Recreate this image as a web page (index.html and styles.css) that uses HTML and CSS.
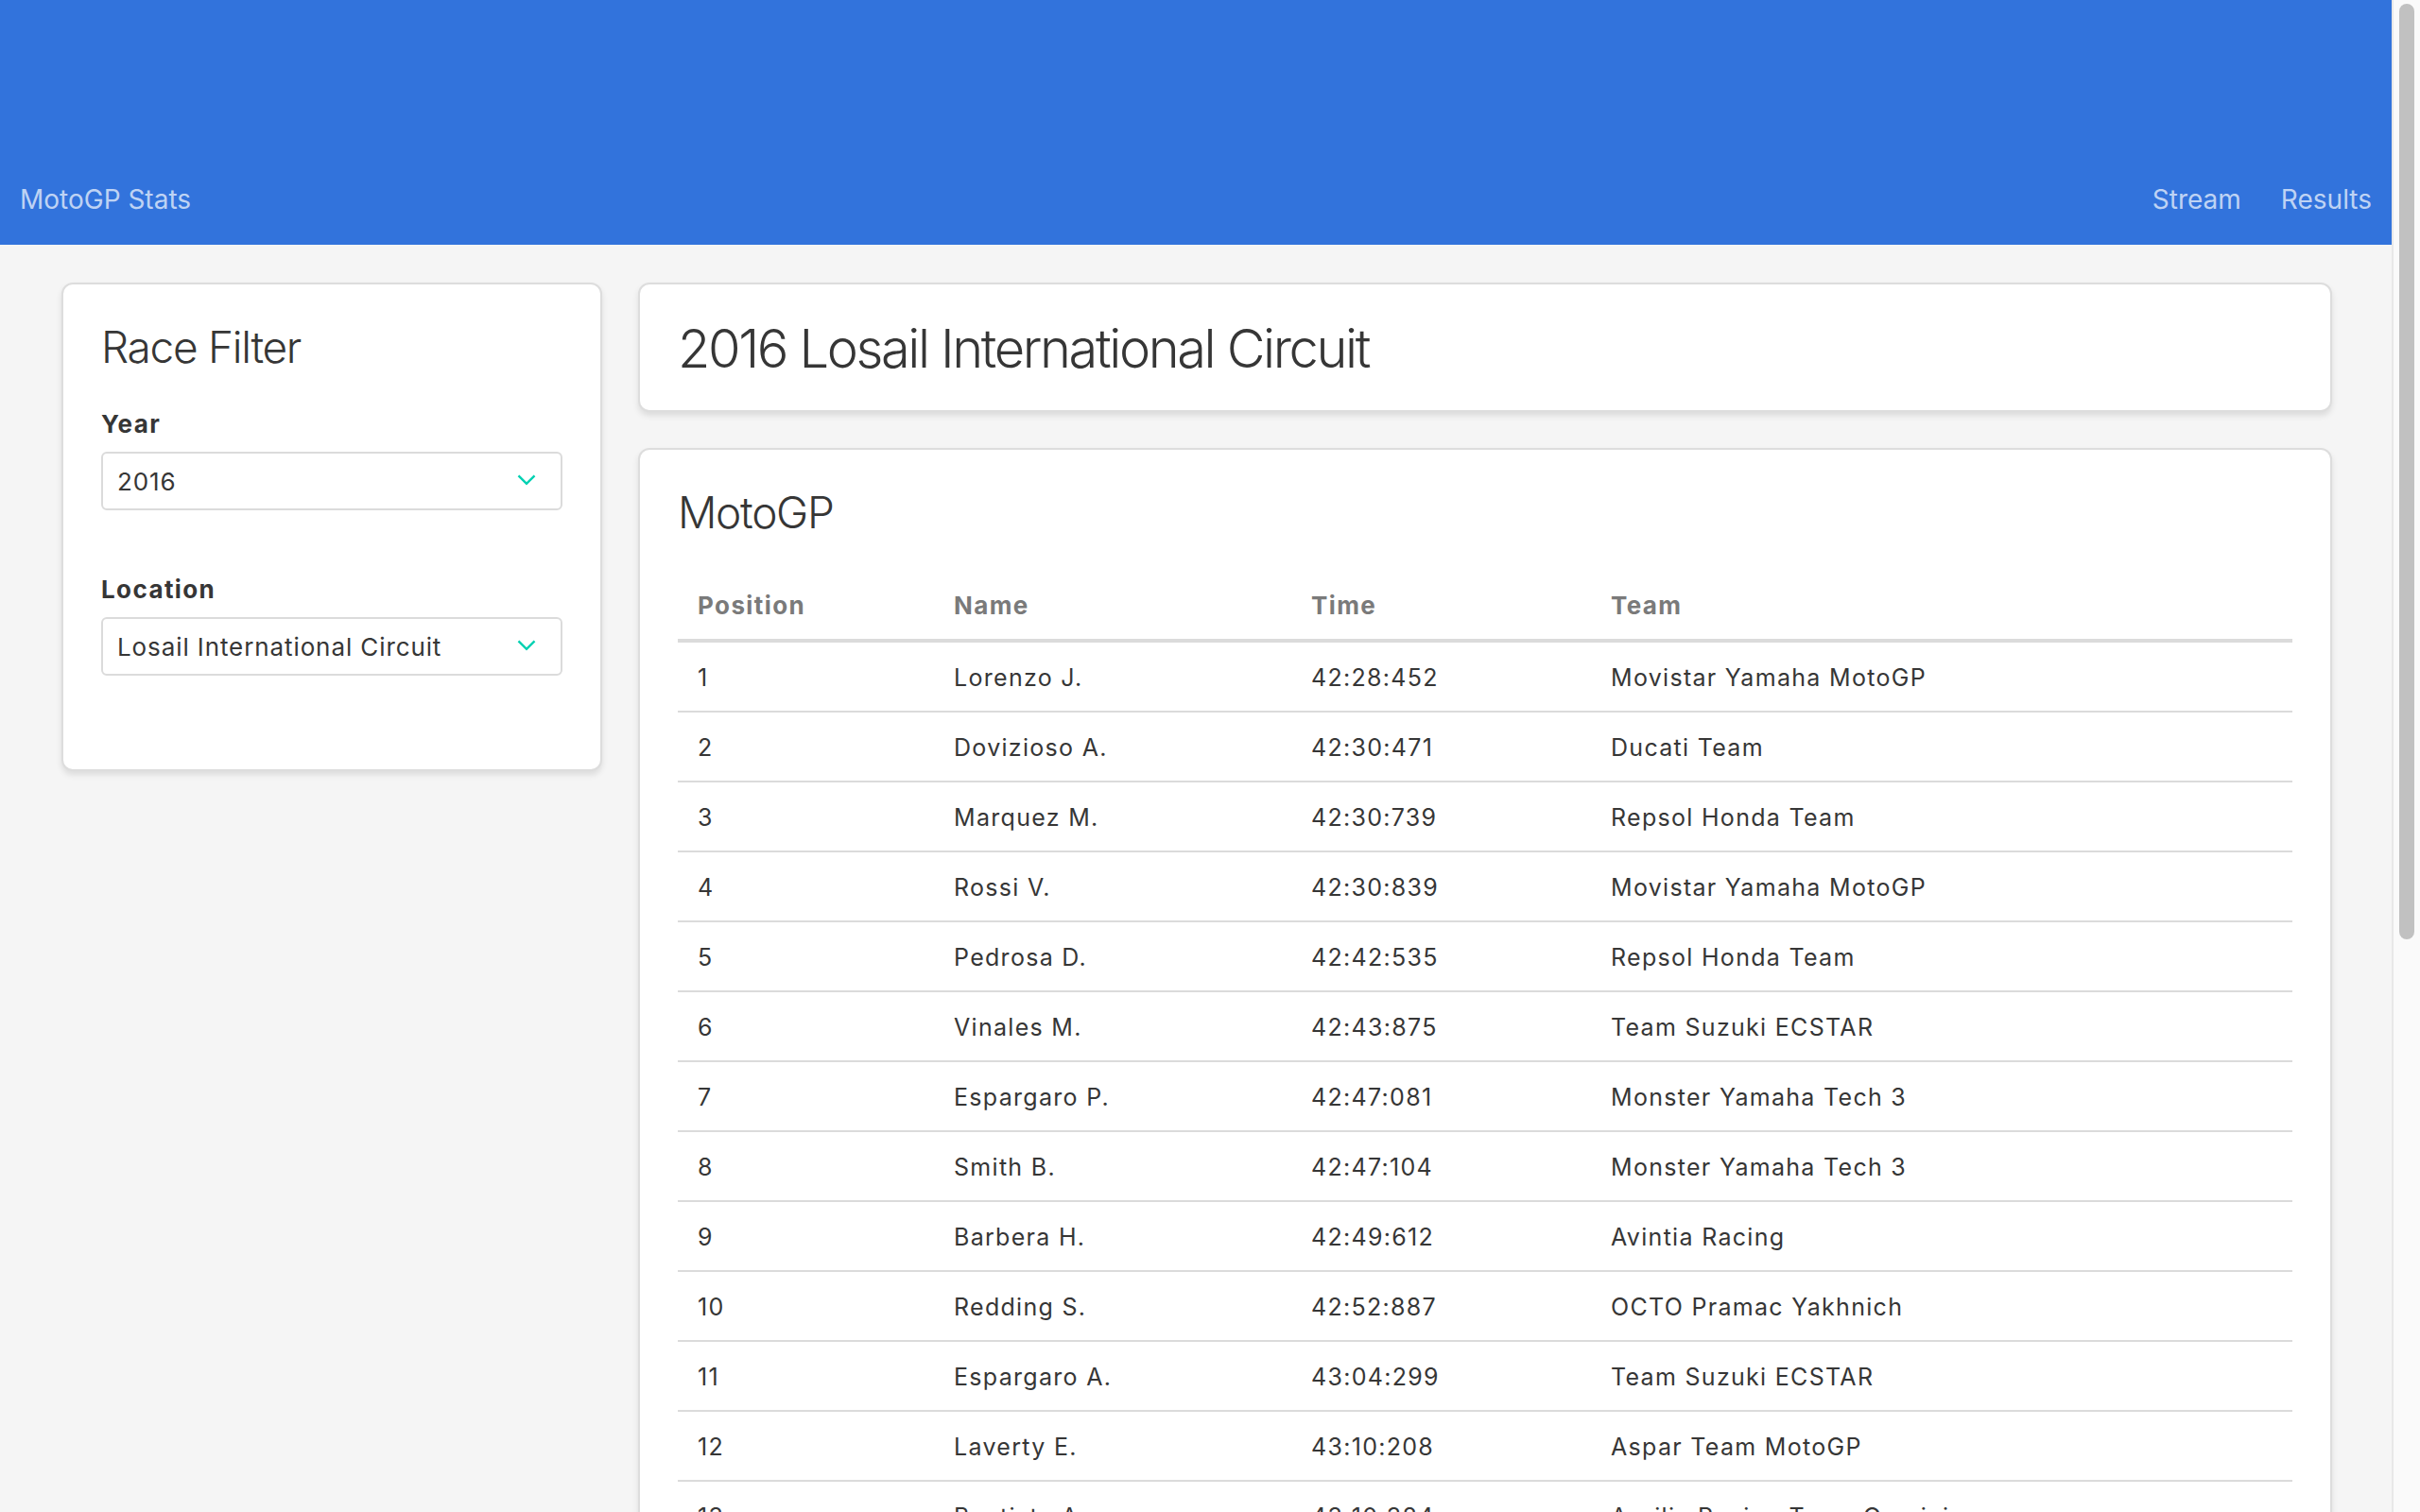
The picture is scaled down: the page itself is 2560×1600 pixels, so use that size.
FILE: index.html
```html
<!DOCTYPE html>
<html lang="en">
<head>
<meta charset="utf-8">
<title>MotoGP Stats</title>
<link rel="stylesheet" href="styles.css">
</head>
<body>
<div class="app">
  <header class="topbar">
    <nav class="nav">
      <a class="brand" href="#">MotoGP Stats</a>
      <div class="nav-links">
        <a href="#">Stream</a>
        <a href="#">Results</a>
      </div>
    </nav>
  </header>
  <main class="page">
    <aside class="box filter">
      <h2 class="title">Race Filter</h2>
      <div class="field">
        <label class="label">Year</label>
        <div class="select"><span>2016</span><svg class="arrow" viewBox="0 0 20 12" width="20" height="12"><polyline points="1.5,1.5 10,10 18.5,1.5" fill="none" stroke="#00d1b2" stroke-width="2.4"/></svg></div>
      </div>
      <div class="field">
        <label class="label">Location</label>
        <div class="select"><span>Losail International Circuit</span><svg class="arrow" viewBox="0 0 20 12" width="20" height="12"><polyline points="1.5,1.5 10,10 18.5,1.5" fill="none" stroke="#00d1b2" stroke-width="2.4"/></svg></div>
      </div>
    </aside>
    <section class="results">
      <div class="box race-box">
        <h1 class="race-title">2016 Losail International Circuit</h1>
      </div>
      <div class="box">
        <h2 class="title">MotoGP</h2>
        <table class="table">
          <thead>
            <tr><th class="c-pos">Position</th><th class="c-name">Name</th><th class="c-time">Time</th><th>Team</th></tr>
          </thead>
          <tbody>
            <tr><td>1</td><td>Lorenzo J.</td><td>42:28:452</td><td>Movistar Yamaha MotoGP</td></tr>
            <tr><td>2</td><td>Dovizioso A.</td><td>42:30:471</td><td>Ducati Team</td></tr>
            <tr><td>3</td><td>Marquez M.</td><td>42:30:739</td><td>Repsol Honda Team</td></tr>
            <tr><td>4</td><td>Rossi V.</td><td>42:30:839</td><td>Movistar Yamaha MotoGP</td></tr>
            <tr><td>5</td><td>Pedrosa D.</td><td>42:42:535</td><td>Repsol Honda Team</td></tr>
            <tr><td>6</td><td>Vinales M.</td><td>42:43:875</td><td>Team Suzuki ECSTAR</td></tr>
            <tr><td>7</td><td>Espargaro P.</td><td>42:47:081</td><td>Monster Yamaha Tech 3</td></tr>
            <tr><td>8</td><td>Smith B.</td><td>42:47:104</td><td>Monster Yamaha Tech 3</td></tr>
            <tr><td>9</td><td>Barbera H.</td><td>42:49:612</td><td>Avintia Racing</td></tr>
            <tr><td>10</td><td>Redding S.</td><td>42:52:887</td><td>OCTO Pramac Yakhnich</td></tr>
            <tr><td>11</td><td>Espargaro A.</td><td>43:04:299</td><td>Team Suzuki ECSTAR</td></tr>
            <tr><td>12</td><td>Laverty E.</td><td>43:10:208</td><td>Aspar Team MotoGP</td></tr>
            <tr><td>13</td><td>Bautista A.</td><td>43:10:384</td><td>Aprilia Racing Team Gresini</td></tr>
            <tr><td>14</td><td>Bradl S.</td><td>43:14:279</td><td>Aprilia Racing Team Gresini</td></tr>
            <tr><td>15</td><td>Baz L.</td><td>43:15:108</td><td>Avintia Racing</td></tr>
            <tr><td>16</td><td>Rabat E.</td><td>43:23:616</td><td>Estrella Galicia 0,0 Marc VDS</td></tr>
            <tr><td>17</td><td>Hernandez Y.</td><td>43:31:452</td><td>Aspar Team MotoGP</td></tr>
            <tr><td>18</td><td>Pirro M.</td><td>43:40:118</td><td>OCTO Pramac Yakhnich</td></tr>
            <tr><td>19</td><td>Iannone A.</td><td>DNF</td><td>Ducati Team</td></tr>
            <tr><td>20</td><td>Crutchlow C.</td><td>DNF</td><td>LCR Honda</td></tr>
            <tr><td>21</td><td>Miller J.</td><td>DNF</td><td>Estrella Galicia 0,0 Marc VDS</td></tr>
          </tbody>
        </table>
      </div>
    </section>
  </main>
</div>
<div class="scrollbar" aria-hidden="true"><div class="thumb"></div></div>
</body>
</html>
```

FILE: styles.css
```css
html {
  background: #f5f5f5;
}
body {
  margin: 0;
  display: flex;
  font-family: Inter, "Noto Sans", sans-serif;
  color: #363636;
}
a {
  text-decoration: none;
  color: inherit;
}
.app {
  flex: 1;
  min-width: 0;
}

/* window scrollbar */
.scrollbar {
  flex: 0 0 30px;
  box-sizing: border-box;
  background: #fafafa;
  border-left: 2px solid #e8e8e8;
  padding: 4px 6px 0 6px;
}
.thumb {
  height: 990px;
  background: #c1c1c1;
  border-radius: 8px;
}

/* top bar */
.topbar {
  background: #3273dc;
  height: 259px;
  display: flex;
  align-items: flex-end;
}
.nav {
  flex: 1;
  display: flex;
  justify-content: space-between;
  padding: 0 21px 30px;
  font-size: 28px;
  line-height: 36px;
  color: rgba(255, 255, 255, 0.7);
}
.nav-links {
  display: flex;
  gap: 42px;
}

/* layout */
.page {
  display: grid;
  grid-template-columns: 572px 1fr;
  gap: 38px;
  align-items: start;
  padding: 40px 63px 96px 65px;
}
.results {
  display: flex;
  flex-direction: column;
  gap: 38px;
}

/* boxes */
.box {
  background: #fff;
  border: 2px solid #dddddd;
  border-radius: 12px;
  box-shadow: 0 4px 6px rgba(10, 10, 10, 0.1);
  padding: 40px;
}
.title {
  margin: 0 0 36px;
  font-size: 46px;
  font-weight: 300;
  line-height: 52px;
  letter-spacing: -1.3px;
  color: #363636;
}
.race-box {
  padding-bottom: 37px;
}
.race-title {
  margin: 0;
  font-size: 56px;
  font-weight: 300;
  line-height: 56px;
  letter-spacing: -2.4px;
  color: #363636;
}

/* filter form */
.filter {
  padding-bottom: 99px;
}
.field + .field {
  margin-top: 64px;
}
.label {
  display: block;
  font-size: 26px;
  font-weight: 700;
  line-height: 39px;
  letter-spacing: 1.4px;
  margin-bottom: 10px;
  color: #363636;
}
.select {
  position: relative;
  height: 62px;
  box-sizing: border-box;
  border: 2px solid #dbdbdb;
  border-radius: 6px;
  padding: 0 15px;
  display: flex;
  align-items: center;
  font-size: 26px;
  letter-spacing: 0.9px;
  color: #363636;
}
.arrow {
  position: absolute;
  right: 26px;
  top: 50%;
  transform: translateY(-60%);
}

/* table */
.table {
  width: 100%;
  border-collapse: separate;
  border-spacing: 0;
  font-size: 25px;
  line-height: 36px;
  letter-spacing: 1.3px;
}
.table th,
.table td {
  text-align: left;
  vertical-align: top;
  padding: 19px 21px 17px;
}
.table th {
  color: #7a7a7a;
  font-size: 26px;
  font-weight: 700;
  letter-spacing: 1.4px;
  border-bottom: 4px solid #dbdbdb;
}
.table td {
  color: #363636;
  border-bottom: 2px solid #dbdbdb;
}
.c-pos {
  width: 229px;
}
.c-name {
  width: 336px;
}
.c-time {
  width: 275px;
}
```
